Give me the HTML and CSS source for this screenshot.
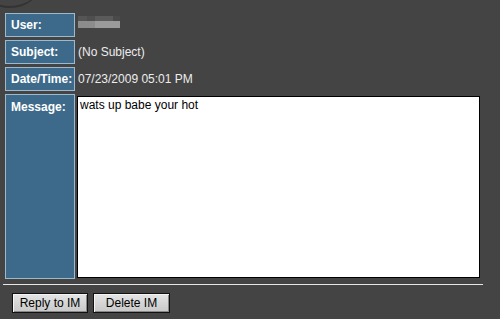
FILE: index.html
```html
<!DOCTYPE html>
<html lang="en">
<head>
    <meta charset="UTF-8">
    <title>Read IM</title>
    <link rel="stylesheet" href="styles.css">
</head>
<body>

    <div class="corner"></div>

    <div class="im">
        <div class="row">
            <div class="label">User:</div>
            <div class="value">
                <div class="blur">
                    <span class="b1"></span><span class="b2"></span><span class="b3"></span>
                    <span class="b4"></span><span class="b5"></span><span class="b6"></span>
                </div>
            </div>
        </div>
        <div class="row">
            <div class="label">Subject:</div>
            <div class="value">(No Subject)</div>
        </div>
        <div class="row">
            <div class="label">Date/Time:</div>
            <div class="value">07/23/2009 05:01 PM</div>
        </div>
        <div class="row message-row">
            <div class="label">Message:</div>
            <div class="message">wats up babe your hot</div>
        </div>
    </div>

    <hr class="divider">

    <div class="buttons">
        <button class="btn reply">Reply to IM</button>
        <button class="btn delete">Delete IM</button>
    </div>

</body>
</html>
```

FILE: styles.css
```css
body {
    margin: 0;
    background-color: #444444;
    font-family: Arial, "Liberation Sans", sans-serif;
    font-size: 12px;
    color: #ececec;
    overflow: hidden;
}
.corner {
    position: absolute;
    left: -20px;
    top: -40px;
    width: 60px;
    height: 46px;
    border-radius: 50%;
    border-bottom: 2px solid #333;
}
.im {
    display: flex;
    flex-direction: column;
    gap: 3px;
    padding: 13px 0 0 5px;
}
.row {
    display: flex;
    gap: 2px;
    height: 24px;
}
.label {
    width: 63px;
    padding-left: 5px;
    display: flex;
    align-items: center;
    background-color: #3d6a8a;
    border: 1px solid #9fb9cc;
    color: #ffffff;
    font-weight: bold;
}
.value {
    display: flex;
    align-items: center;
    padding-left: 1px;
}
.blur {
    display: grid;
    grid-template-columns: 9px 8px 10px 8px 7px;
    grid-template-rows: 5px 7px;
    margin-top: -7px;
}
.blur span { display: block; }
.b1 { background: #555; }
.b2 { background: #4e4e4e; }
.b3 { background: #5a5a5a; grid-column: span 2; }
.b4 { background: #4a4a4a; }
.b5 { background: #8c8c8c; grid-column: span 2; }
.b6 { background: #9a9a9a; grid-column: span 3; }
.message-row {
    height: 185px;
}
.message-row .label {
    align-items: flex-start;
    padding-top: 5px;
    height: 178px;
}
.message {
    margin-top: 2px;
    width: 397px;
    height: 178px;
    padding: 1px 2px;
    border: 1px solid #000;
    background-color: #ffffff;
    color: #000;
}
.divider {
    margin: 5px 0 0 3px;
    width: 480px;
    height: 1px;
    border: none;
    background-color: #e6e6e6;
}
.buttons {
    display: flex;
    gap: 5px;
    padding: 8px 0 0 12px;
}
.btn {
    height: 20px;
    padding: 0;
    font-family: Arial, "Liberation Sans", sans-serif;
    font-size: 12px;
    color: #000;
    border: 1px solid #111;
    box-shadow: inset 1px 1px 0 #f4f4f4, inset -1px -1px 0 #888;
    background: linear-gradient(#e4e4e4, #c8c8c8);
}
.reply { width: 76px; }
.delete { width: 77px; }
```
